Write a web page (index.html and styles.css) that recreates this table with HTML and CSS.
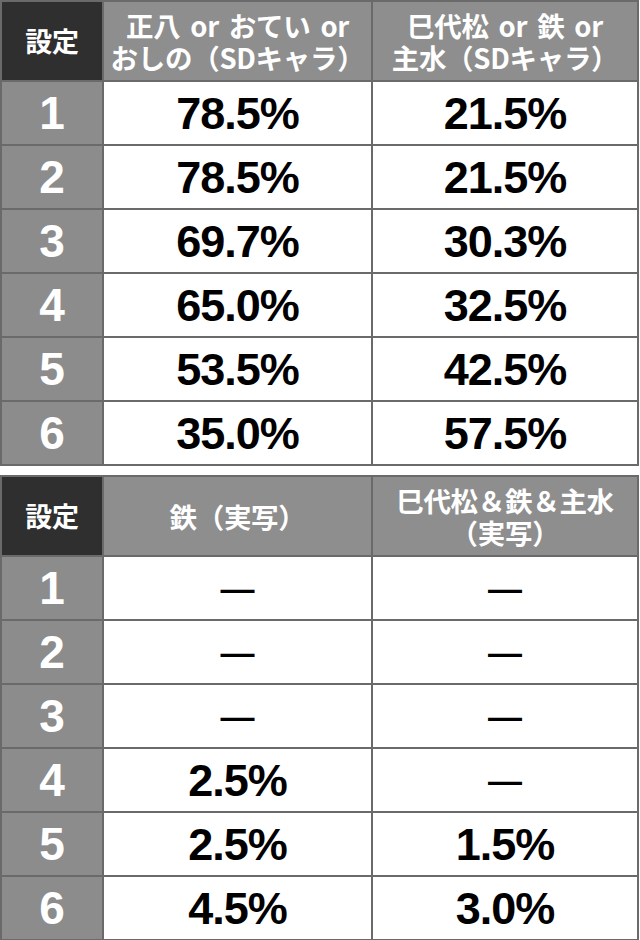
FILE: index.html
```html
<!DOCTYPE html>
<html lang="ja">
<head>
<meta charset="utf-8">
<title>設定別 振り分け</title>
<link rel="stylesheet" href="styles.css">
</head>
<body>
<div class="page">
  <table class="rate">
    <colgroup><col class="c-set"><col class="c-a"><col class="c-b"></colgroup>
    <thead>
      <tr>
        <th class="h-set">設定</th>
        <th class="h-col">正八 or おてい or<br>おしの（SDキャラ）</th>
        <th class="h-col">巳代松 or 鉄 or<br>主水（SDキャラ）</th>
      </tr>
    </thead>
    <tbody>
      <tr><th class="num">1</th><td class="val">78.5%</td><td class="val">21.5%</td></tr>
      <tr><th class="num">2</th><td class="val">78.5%</td><td class="val">21.5%</td></tr>
      <tr><th class="num">3</th><td class="val">69.7%</td><td class="val">30.3%</td></tr>
      <tr><th class="num">4</th><td class="val">65.0%</td><td class="val">32.5%</td></tr>
      <tr><th class="num">5</th><td class="val">53.5%</td><td class="val">42.5%</td></tr>
      <tr><th class="num">6</th><td class="val">35.0%</td><td class="val">57.5%</td></tr>
    </tbody>
  </table>

  <table class="rate second">
    <colgroup><col class="c-set"><col class="c-a"><col class="c-b"></colgroup>
    <thead>
      <tr>
        <th class="h-set">設定</th>
        <th class="h-col">鉄（実写）</th>
        <th class="h-col">巳代松＆鉄＆主水<br>（実写）</th>
      </tr>
    </thead>
    <tbody>
      <tr><th class="num">1</th><td class="val"><span class="dash">—</span></td><td class="val"><span class="dash">—</span></td></tr>
      <tr><th class="num">2</th><td class="val"><span class="dash">—</span></td><td class="val"><span class="dash">—</span></td></tr>
      <tr><th class="num">3</th><td class="val"><span class="dash">—</span></td><td class="val"><span class="dash">—</span></td></tr>
      <tr><th class="num">4</th><td class="val">2.5%</td><td class="val"><span class="dash">—</span></td></tr>
      <tr><th class="num">5</th><td class="val">2.5%</td><td class="val">1.5%</td></tr>
      <tr><th class="num">6</th><td class="val">4.5%</td><td class="val">3.0%</td></tr>
    </tbody>
  </table>
</div>
</body>
</html>
```

FILE: styles.css
```css
html, body {
  margin: 0;
  padding: 0;
  background: #ffffff;
}

.page {
  width: 640px;
}

.rate {
  width: 637px;
  table-layout: fixed;
  border-collapse: collapse;
  font-family: "Liberation Sans", "Noto Sans CJK JP", sans-serif;
}

.second {
  margin-top: 9px;
}

.c-set { width: 102px; }
.c-a { width: 269px; }
.c-b { width: 266px; }

.rate th,
.rate td {
  border: 2px solid #6a6a6a;
  padding: 0;
  text-align: center;
  vertical-align: middle;
}

.rate thead tr {
  height: 80px;
}

.rate tbody tr {
  height: 64px;
}

.h-set,
.h-col {
  font-family: "Noto Sans CJK JP", sans-serif;
  font-weight: 700;
  font-size: 27.5px;
  line-height: 32px;
  color: #ffffff;
  white-space: nowrap;
  letter-spacing: -0.3px;
}

.h-set {
  background: #2f2f2f;
  font-size: 27px;
}

.h-col {
  background: #8e8e8e;
  word-spacing: 4px;
}

.num {
  background: #8c8c8c;
  color: #ffffff;
  font-family: "Liberation Sans", sans-serif;
  font-weight: 700;
  font-size: 46px;
  line-height: 46px;
  padding-top: 6px;
}

.val {
  background: #ffffff;
  color: #000000;
  font-family: "Liberation Sans", sans-serif;
  font-weight: 700;
  font-size: 45px;
  line-height: 45px;
  letter-spacing: -1px;
  padding-top: 6px;
}

.dash {
  display: inline-block;
  font-size: 34px;
  letter-spacing: 0;
  position: relative;
  top: -2px;
}
```
